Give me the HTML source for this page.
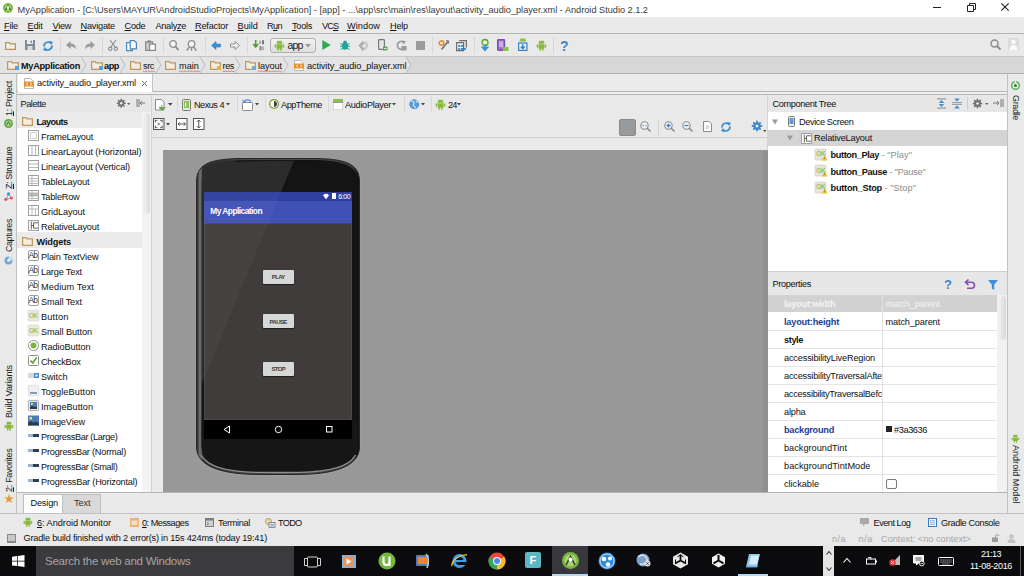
<!DOCTYPE html>
<html><head><meta charset="utf-8"><title>Android Studio</title>
<style>
*{box-sizing:border-box;margin:0;padding:0}
html,body{width:1024px;height:576px;overflow:hidden;background:#e9e9e9}
body{font-family:"Liberation Sans",sans-serif;font-size:9.5px;color:#1a1a1a;position:relative}
.a{position:absolute;white-space:nowrap;display:block}
u{text-decoration:underline;text-underline-offset:1px}
svg{position:absolute;overflow:visible;display:block}
</style></head><body>
<div class="a" style="left:0px;top:0px;width:1024px;height:17px;background:#ffffff;"></div>
<div class="a" style="left:0px;top:17px;width:1024px;height:17px;background:#eaeaea;"></div>
<div class="a" style="left:0px;top:33px;width:1024px;height:1px;background:#b4b4b4;"></div>
<div class="a" style="left:0px;top:34px;width:1024px;height:22px;background:#e9e9e9;"></div>
<div class="a" style="left:0px;top:56px;width:1024px;height:18px;background:#d7d7d7;"></div>
<div class="a" style="left:0px;top:56px;width:1024px;height:1px;background:#c6c6c6;"></div>
<div class="a" style="left:0px;top:73px;width:1024px;height:1px;background:#b0b0b0;"></div>
<div class="a" style="left:0px;top:74px;width:1024px;height:440px;background:#e9e9e9;"></div>
<div class="a" style="left:0px;top:74px;width:17px;height:439px;background:#e9e9e9;border-right:1px solid #c2c2c2;"></div>
<div class="a" style="left:1007px;top:74px;width:17px;height:439px;background:#e9e9e9;border-left:1px solid #c2c2c2;"></div>
<div class="a" style="left:17px;top:74px;width:990px;height:17px;background:#ebebeb;"></div>
<div class="a" style="left:17px;top:91px;width:990px;height:1px;background:#b4b4b4;"></div>
<div class="a" style="left:17px;top:92px;width:990px;height:2px;background:#efefef;"></div>
<div class="a" style="left:17px;top:94px;width:990px;height:1px;background:#b4b4b4;"></div>
<div class="a" style="left:18px;top:74px;width:135px;height:18px;background:#ffffff;border-right:1px solid #c4c4c4;"></div>
<svg style="left:3px;top:3px" width="10" height="10" viewBox="0 0 10 10"><circle cx="5" cy="5" r="5" fill="#7cb342"/><circle cx="5" cy="5" r="3.4" fill="#9ccc65"/><path d="M2.3 7.2 L5 2.6 L7.7 7.2" fill="none" stroke="#33691e" stroke-width="1.1"/><circle cx="5" cy="4.6" r="1.3" fill="#fff"/></svg>
<span class="a" id="t0" style="font-size:9.2px;line-height:12px;height:12px;color:#3a3a3a;letter-spacing:-0.010px;left:17.5px;top:3.5px;">MyApplication - [C:\Users\MAYUR\AndroidStudioProjects\MyApplication] - [app] - ...\app\src\main\res\layout\activity_audio_player.xml - Android Studio 2.1.2</span>
<div class="a" style="left:933px;top:7px;width:8px;height:1px;background:#222;"></div>
<svg style="left:967px;top:3px" width="9" height="9" viewBox="0 0 9 9"><path d="M0.5 2.5h6v6h-6z M2.5 2.5v-2h6v6h-2" fill="none" stroke="#222" stroke-width="1"/></svg>
<svg style="left:1001px;top:3px" width="8" height="8" viewBox="0 0 8 8"><path d="M0.3 0.3L7.7 7.7M7.7 0.3L0.3 7.7" stroke="#222" stroke-width="1.1"/></svg>
<span class="a" id="t1" style="font-size:9.2px;line-height:12px;height:12px;color:#111;letter-spacing:-0.207px;left:4px;top:19.5px;"><u>F</u>ile</span>
<span class="a" id="t2" style="font-size:9.2px;line-height:12px;height:12px;color:#111;letter-spacing:-0.215px;left:27.5px;top:19.5px;"><u>E</u>dit</span>
<span class="a" id="t3" style="font-size:9.2px;line-height:12px;height:12px;color:#111;letter-spacing:-0.316px;left:52.5px;top:19.5px;"><u>V</u>iew</span>
<span class="a" id="t4" style="font-size:9.2px;line-height:12px;height:12px;color:#111;letter-spacing:-0.223px;left:80.5px;top:19.5px;"><u>N</u>avigate</span>
<span class="a" id="t5" style="font-size:9.2px;line-height:12px;height:12px;color:#111;letter-spacing:-0.246px;left:124.5px;top:19.5px;"><u>C</u>ode</span>
<span class="a" id="t6" style="font-size:9.2px;line-height:12px;height:12px;color:#111;letter-spacing:-0.315px;left:155.5px;top:19.5px;">Analy<u>z</u>e</span>
<span class="a" id="t7" style="font-size:9.2px;line-height:12px;height:12px;color:#111;letter-spacing:-0.217px;left:195px;top:19.5px;"><u>R</u>efactor</span>
<span class="a" id="t8" style="font-size:9.2px;line-height:12px;height:12px;color:#111;letter-spacing:0.009px;left:237.5px;top:19.5px;"><u>B</u>uild</span>
<span class="a" id="t9" style="font-size:9.2px;line-height:12px;height:12px;color:#111;letter-spacing:-0.630px;left:267px;top:19.5px;">R<u>u</u>n</span>
<span class="a" id="t10" style="font-size:9.2px;line-height:12px;height:12px;color:#111;letter-spacing:-0.291px;left:292px;top:19.5px;"><u>T</u>ools</span>
<span class="a" id="t11" style="font-size:9.2px;line-height:12px;height:12px;color:#111;letter-spacing:-0.900px;left:322px;top:19.5px;">VC<u>S</u></span>
<span class="a" id="t12" style="font-size:9.2px;line-height:12px;height:12px;color:#111;letter-spacing:0.052px;left:347px;top:19.5px;"><u>W</u>indow</span>
<span class="a" id="t13" style="font-size:9.2px;line-height:12px;height:12px;color:#111;letter-spacing:-0.227px;left:390px;top:19.5px;"><u>H</u>elp</span>
<svg style="left:5px;top:40.5px" width="11" height="9" viewBox="0 0 11 9"><path d="M0.6 1.6h3.6l1 1.3h5.2v5.5h-9.8z" fill="#f3efe8" stroke="#bb9259" stroke-width="1.2"/></svg>
<svg style="left:24.5px;top:40px" width="10" height="10" viewBox="0 0 10 10"><path d="M0 0h10v10h-10z" fill="#7f8b97"/><rect x="2" y="0" width="6" height="4" fill="#e8edf2"/><rect x="2.5" y="6" width="5" height="4" fill="#d5dbe2"/><rect x="5.5" y="0.7" width="1.5" height="2.4" fill="#7f8b97"/></svg>
<svg style="left:42px;top:39.5px" width="12" height="12" viewBox="0 0 12 12"><path d="M2 6.5A4.2 4.2 0 0 1 9 3.2" fill="none" stroke="#3c8ed0" stroke-width="1.8"/><path d="M10 5.5A4.2 4.2 0 0 1 3 8.8" fill="none" stroke="#3c8ed0" stroke-width="1.8"/><path d="M7.2 0.8l3.8 1.2-2 3.2z" fill="#3c8ed0"/><path d="M4.8 11.2l-3.8-1.2 2-3.2z" fill="#3c8ed0"/></svg>
<div class="a" style="left:60px;top:37px;width:1px;height:17px;background:#d9d9d9;"></div>
<svg style="left:66px;top:40.5px" width="10" height="9" viewBox="0 0 10 9"><path d="M0 4l4.5-4v2.5c3 0 5.5 1.5 5.5 6-1.3-2.3-3-3-5.5-3v2.5z" fill="#9c9c9c"/></svg>
<svg style="left:84.5px;top:40.5px" width="10" height="9" viewBox="0 0 10 9"><path d="M10 4l-4.5-4v2.5c-3 0-5.5 1.5-5.5 6 1.3-2.3 3-3 5.5-3v2.5z" fill="#9c9c9c"/></svg>
<div class="a" style="left:102px;top:37px;width:1px;height:17px;background:#d9d9d9;"></div>
<svg style="left:107.5px;top:39.5px" width="10" height="11" viewBox="0 0 10 11"><path d="M2 0l5.5 7.5M8 0l-5.5 7.5" stroke="#8e8e8e" stroke-width="1.1" fill="none"/><circle cx="2.2" cy="8.8" r="1.7" fill="none" stroke="#8e8e8e" stroke-width="1.1"/><circle cx="7.8" cy="8.8" r="1.7" fill="none" stroke="#8e8e8e" stroke-width="1.1"/></svg>
<svg style="left:126px;top:39.5px" width="11" height="11" viewBox="0 0 11 11"><path d="M0.6 2.6h5.8v8h-5.8z" fill="#fff" stroke="#4a86b8" stroke-width="1.2"/><path d="M4.2 0.6h4l2.2 2.2v6h-6.2z" fill="#fff" stroke="#4a86b8" stroke-width="1.2"/></svg>
<svg style="left:145px;top:39.5px" width="11" height="11" viewBox="0 0 11 11"><path d="M0.6 1.8h7v8.6h-7z" fill="#c9c9c9" stroke="#8a8a8a" stroke-width="1.2"/><rect x="2.5" y="0.3" width="3.2" height="2.4" fill="#8a8a8a"/><path d="M4.6 4.2h5.8v6.2h-5.8z" fill="#fff" stroke="#8a8a8a" stroke-width="1.2"/></svg>
<div class="a" style="left:162.5px;top:37px;width:1px;height:17px;background:#d9d9d9;"></div>
<svg style="left:169px;top:39.5px" width="10" height="11" viewBox="0 0 10 11"><circle cx="4" cy="4" r="3.3" fill="#f4f4f4" stroke="#8e8e8e" stroke-width="1.3"/><path d="M6.4 6.6l3.2 3.6" stroke="#8e8e8e" stroke-width="1.8"/></svg>
<svg style="left:186px;top:39.5px" width="11.5" height="11" viewBox="0 0 11.5 11"><circle cx="5.5" cy="4" r="3.3" fill="#f4f4f4" stroke="#8e8e8e" stroke-width="1.3"/><path d="M3.6 6.6l-3 4M7.4 6.6l3 4M5.5 7.2v3.5" stroke="#8e8e8e" stroke-width="1.5" fill="none"/></svg>
<div class="a" style="left:205px;top:37px;width:1px;height:17px;background:#d9d9d9;"></div>
<svg style="left:211px;top:40.5px" width="10" height="9" viewBox="0 0 10 9"><path d="M0.5 4.5l4.5-4v2.5h4.5v3h-4.5v2.5z" fill="#3a8fd6" stroke="#2f7dc0" stroke-width="0.6"/></svg>
<svg style="left:229.5px;top:40.5px" width="10" height="9" viewBox="0 0 10 9"><path d="M9.5 4.5l-4.5-4v2.5h-4.5v3h4.5v2.5z" fill="#f4f4f4" stroke="#8e8e8e" stroke-width="1"/></svg>
<div class="a" style="left:247px;top:37px;width:1px;height:17px;background:#d9d9d9;"></div>
<svg style="left:253px;top:39.5px" width="11" height="11" viewBox="0 0 11 11"><path d="M2.7 0v6M0.3 4l2.4 3 2.4-3" stroke="#4a9e2f" stroke-width="1.6" fill="none"/><path d="M7 0.5v3.5M9.5 0.5h1v3.5h-1zM7 6.5h1v3.5h-1zM10 6.5v3.5" stroke="#6a6a6a" stroke-width="0.9" fill="none"/></svg>
<div class="a" style="left:269.5px;top:38px;width:46.5px;height:15px;border:1px solid #b0b0b0;border-radius:3px;background:linear-gradient(#f2f2f2,#dedede)"></div>
<svg style="left:273.5px;top:39.5px" width="11.0" height="11.0" viewBox="0 0 11 11"><path d="M2.5 3.8a3 3 0 0 1 6 0z" fill="#86b83a"/><rect x="2.5" y="4.3" width="6" height="4.4" rx="0.6" fill="#86b83a"/><rect x="0.7" y="4.3" width="1.3" height="3.4" rx="0.6" fill="#86b83a"/><rect x="9" y="4.3" width="1.3" height="3.4" rx="0.6" fill="#86b83a"/><rect x="3.5" y="8" width="1.4" height="2.8" rx="0.6" fill="#86b83a"/><rect x="6.1" y="8" width="1.4" height="2.8" rx="0.6" fill="#86b83a"/><path d="M3.3 0.3l1 1.4M7.7 0.3l-1 1.4" stroke="#86b83a" stroke-width="0.6"/></svg>
<span class="a" id="t14" style="font-size:10.5px;line-height:14px;height:14px;color:#1a1a1a;letter-spacing:-0.844px;left:287.5px;top:38.0px;">app</span>
<svg style="left:305px;top:43.5px" width="6" height="4" viewBox="0 0 6 4"><path d="M0 0h6l-3 3.5z" fill="#9a9a9a"/></svg>
<svg style="left:321.5px;top:40px" width="9" height="10" viewBox="0 0 9 10"><path d="M0.3 0l8.5 5-8.5 5z" fill="#2fa84f"/></svg>
<svg style="left:340px;top:39.5px" width="10" height="11" viewBox="0 0 10 11"><ellipse cx="5" cy="6" rx="3" ry="3.8" fill="#1fa59a"/><circle cx="5" cy="2.3" r="1.7" fill="#1fa59a"/><path d="M0.3 3.5l2.5 1.3M9.7 3.5l-2.5 1.3M0 6.3h2.5M10 6.3h-2.5M0.5 9.5l2.3-1.3M9.5 9.5l-2.3-1.3" stroke="#1fa59a" stroke-width="1"/></svg>
<svg style="left:358px;top:39.5px" width="11" height="11" viewBox="0 0 11 11"><path d="M0.5 5.5l4-4.5 2.5 2-3 3 3 3-2.5 2z" fill="#b0b0b0"/><path d="M6 2.5l2-1.5 2.5 4.5-2.5 4.5-2-1.5 2-3z" fill="#c8c8c8"/></svg>
<svg style="left:378px;top:39px" width="10" height="12" viewBox="0 0 10 12"><rect x="0.6" y="0.6" width="5.8" height="9.8" rx="0.8" fill="#e6e6e6" stroke="#777" stroke-width="1.2"/><path d="M5 7.5h4.5v4h-4.5z" fill="#59a869"/><path d="M6 9.5h2.5" stroke="#fff" stroke-width="0.8"/></svg>
<svg style="left:396px;top:39.5px" width="11" height="11" viewBox="0 0 11 11"><path d="M8.5 2.8A4 4 0 1 0 9 7" fill="none" stroke="#9a9a9a" stroke-width="1.7"/><path d="M6 0.2l4 1.3-2.5 3z" fill="#9a9a9a"/><rect x="5.5" y="6" width="5" height="4.5" fill="#9a9a9a"/></svg>
<div class="a" style="left:415.5px;top:40.5px;width:9px;height:9px;background:#9b9b9b;"></div>
<div class="a" style="left:432px;top:37px;width:1px;height:17px;background:#d9d9d9;"></div>
<svg style="left:438px;top:39.5px" width="11" height="11" viewBox="0 0 11 11"><circle cx="3.5" cy="3" r="2.3" fill="#fbe3c0" stroke="#e08a2e" stroke-width="1.4"/><path d="M10 1.5l-6.5 8" stroke="#777" stroke-width="1.8"/><path d="M8 0.5l2.7 0.6-0.6 2.7" fill="none" stroke="#777" stroke-width="1.1"/></svg>
<svg style="left:456px;top:39.5px" width="11" height="11" viewBox="0 0 11 11"><path d="M0.6 2.6h7v8h-7z" fill="#eee" stroke="#6d6d6d" stroke-width="1.2"/><path d="M3.2 0.6h7.2v7" fill="none" stroke="#6d6d6d" stroke-width="1.2"/><rect x="2.2" y="5" width="2" height="2" fill="#3a8fd6"/><rect x="5" y="5" width="2" height="2" fill="#3a8fd6"/><rect x="2.2" y="8" width="2" height="2" fill="#3a8fd6"/><rect x="5" y="8" width="2" height="2" fill="#3a8fd6"/><rect x="8" y="8" width="2" height="2" fill="#3a8fd6"/></svg>
<div class="a" style="left:474px;top:37px;width:1px;height:17px;background:#d9d9d9;"></div>
<svg style="left:480px;top:39px" width="10" height="12" viewBox="0 0 10 12"><circle cx="5" cy="3.5" r="3" fill="#dff0d0" stroke="#5aa02c" stroke-width="1.3"/><path d="M5 5v5M2 8l3 3.5 3-3.5z" fill="#3a8fd6" stroke="#3a8fd6" stroke-width="1.2"/></svg>
<svg style="left:497px;top:39px" width="11.5" height="12" viewBox="0 0 11.5 12"><rect x="0.6" y="0.6" width="7" height="10.8" rx="0.8" fill="#9a6fc0" stroke="#7a4fa6" stroke-width="1.2"/><rect x="2" y="2.2" width="4.2" height="6" fill="#c9aee3"/><path d="M6 8h5.5v4h-5.5z" fill="#8bc34a"/></svg>
<svg style="left:517.5px;top:39px" width="9.5" height="12" viewBox="0 0 9.5 12"><path d="M1.5 2.5a3.2 3.2 0 0 1 6.5 0z" fill="#8bc34a"/><path d="M2 0l1 1.3M7.5 0l-1 1.3" stroke="#8bc34a" stroke-width="0.7"/><rect x="0.6" y="4" width="8.3" height="7.4" fill="#e9f2fb" stroke="#3a7fc0" stroke-width="1.2"/><path d="M4.750 5v4M2.8 7.5l1.950 2.2 1.950-2.2" stroke="#3a7fc0" stroke-width="1.3" fill="none"/></svg>
<svg style="left:536px;top:39.5px" width="11.0" height="11.0" viewBox="0 0 11 11"><path d="M2.5 3.8a3 3 0 0 1 6 0z" fill="#86b83a"/><rect x="2.5" y="4.3" width="6" height="4.4" rx="0.6" fill="#86b83a"/><rect x="0.7" y="4.3" width="1.3" height="3.4" rx="0.6" fill="#86b83a"/><rect x="9" y="4.3" width="1.3" height="3.4" rx="0.6" fill="#86b83a"/><rect x="3.5" y="8" width="1.4" height="2.8" rx="0.6" fill="#86b83a"/><rect x="6.1" y="8" width="1.4" height="2.8" rx="0.6" fill="#86b83a"/><path d="M3.3 0.3l1 1.4M7.7 0.3l-1 1.4" stroke="#86b83a" stroke-width="0.6"/></svg>
<div class="a" style="left:553px;top:37px;width:1px;height:17px;background:#d9d9d9;"></div>
<span class="a" id="t15" style="font-size:14px;line-height:18px;height:18px;color:#3c86c4;letter-spacing:-0.562px;font-weight:700;left:560px;top:36.5px;">?</span>
<svg style="left:990px;top:39px" width="11" height="11" viewBox="0 0 11 11"><circle cx="4.5" cy="4.5" r="3.5" fill="none" stroke="#8a8a8a" stroke-width="1.5"/><path d="M7 7l3.5 3.5" stroke="#8a8a8a" stroke-width="1.8"/></svg>
<svg style="left:1008px;top:38px" width="11" height="12" viewBox="0 0 11 12"><rect width="11" height="12" fill="#dcdcdc"/><circle cx="5.5" cy="4" r="2.3" fill="#fafafa"/><path d="M1.5 12c0-3.5 1.8-5 4-5s4 1.5 4 5z" fill="#fafafa"/></svg>
<div class="a" style="left:0px;top:57px;width:411px;height:16px;background:#e3e3e3;"></div>
<svg style="left:406px;top:57px" width="8" height="16" viewBox="0 0 8 16"><path d="M0 0l5 8-5 8h8v-16z" fill="#d7d7d7"/><path d="M0 0l5 8-5 8" fill="none" stroke="#b8b8b8" stroke-width="1"/></svg>
<svg style="left:7px;top:59.8px" width="12" height="10" viewBox="0 0 12 10"><path d="M0.6 1.6h3.6l1 1.3h6.2v6.5h-10.8z" fill="#f3ecdf" stroke="#bd9660" stroke-width="1.2"/><rect x="8" y="6" width="4" height="4" fill="#5aa0dc"/></svg>
<span class="a" id="t16" style="font-size:9.2px;line-height:12px;height:12px;color:#111;letter-spacing:-0.292px;font-weight:700;left:21px;top:60.0px;">MyApplication</span>
<svg style="left:81px;top:57px" width="6" height="16" viewBox="0 0 6 16"><path d="M0 0l5 8-5 8" fill="none" stroke="#bdbdbd" stroke-width="1"/></svg>
<svg style="left:91px;top:59.8px" width="12" height="10" viewBox="0 0 12 10"><path d="M0.6 1.6h3.6l1 1.3h6.2v6.5h-10.8z" fill="#f3ecdf" stroke="#bd9660" stroke-width="1.2"/><rect x="8" y="6" width="4" height="4" fill="#5aa0dc"/></svg>
<span class="a" id="t17" style="font-size:9.2px;line-height:12px;height:12px;color:#111;letter-spacing:-0.448px;font-weight:700;left:104px;top:60.0px;">app</span>
<svg style="left:120px;top:57px" width="6" height="16" viewBox="0 0 6 16"><path d="M0 0l5 8-5 8" fill="none" stroke="#bdbdbd" stroke-width="1"/></svg>
<svg style="left:130px;top:59.8px" width="11" height="10" viewBox="0 0 11 10"><path d="M0.6 1.6h3.6l1 1.3h5.2v6.5h-9.8z" fill="#f3ecdf" stroke="#bd9660" stroke-width="1.2"/></svg>
<span class="a" id="t18" style="font-size:9.2px;line-height:12px;height:12px;color:#111;letter-spacing:-0.417px;left:143px;top:60.0px;">src</span>
<svg style="left:156px;top:57px" width="6" height="16" viewBox="0 0 6 16"><path d="M0 0l5 8-5 8" fill="none" stroke="#bdbdbd" stroke-width="1"/></svg>
<svg style="left:165px;top:59.8px" width="11" height="10" viewBox="0 0 11 10"><path d="M0.6 1.6h3.6l1 1.3h5.2v6.5h-9.8z" fill="#f3ecdf" stroke="#bd9660" stroke-width="1.2"/></svg>
<span class="a" id="t19" style="font-size:9.2px;line-height:12px;height:12px;color:#111;letter-spacing:0.020px;left:179px;top:60.0px;">main</span>
<svg style="left:200px;top:57px" width="6" height="16" viewBox="0 0 6 16"><path d="M0 0l5 8-5 8" fill="none" stroke="#bdbdbd" stroke-width="1"/></svg>
<svg style="left:209.5px;top:59.8px" width="11" height="10" viewBox="0 0 11 10"><path d="M0.6 1.6h3.6l1 1.3h5.2v6.5h-9.8z" fill="#f3ecdf" stroke="#bd9660" stroke-width="1.2"/><rect x="7" y="6" width="4" height="4" fill="#e0b050"/></svg>
<span class="a" id="t20" style="font-size:9.2px;line-height:12px;height:12px;color:#111;letter-spacing:-0.422px;left:222.5px;top:60.0px;">res</span>
<svg style="left:235px;top:57px" width="6" height="16" viewBox="0 0 6 16"><path d="M0 0l5 8-5 8" fill="none" stroke="#bdbdbd" stroke-width="1"/></svg>
<svg style="left:244.5px;top:59.8px" width="11" height="10" viewBox="0 0 11 10"><path d="M0.6 1.6h3.6l1 1.3h5.2v6.5h-9.8z" fill="#f3ecdf" stroke="#bd9660" stroke-width="1.2"/><rect x="7" y="6" width="4" height="4" fill="#7aa7d0"/></svg>
<span class="a" id="t21" style="font-size:9.2px;line-height:12px;height:12px;color:#111;letter-spacing:-0.089px;left:258px;top:60.0px;">layout</span>
<svg style="left:283px;top:57px" width="6" height="16" viewBox="0 0 6 16"><path d="M0 0l5 8-5 8" fill="none" stroke="#bdbdbd" stroke-width="1"/></svg>
<svg style="left:0;top:0" width="1" height="1"><path d="M143 70.8L144.5 71.8L146.0 70.8L147.5 71.8L149.0 70.8L150.5 71.8L152.0 70.8L153.5 71.8L155.0 70.8" fill="none" stroke="#d9534f" stroke-width="0.7"/></svg>
<svg style="left:0;top:0" width="1" height="1"><path d="M179 70.8L180.5 71.8L182.0 70.8L183.5 71.8L185.0 70.8L186.5 71.8L188.0 70.8L189.5 71.8L191.0 70.8L192.5 71.8L194.0 70.8L195.5 71.8L197.0 70.8L198.5 71.8L200.0 70.8" fill="none" stroke="#d9534f" stroke-width="0.7"/></svg>
<svg style="left:0;top:0" width="1" height="1"><path d="M222.5 70.8L224.0 71.8L225.5 70.8L227.0 71.8L228.5 70.8L230.0 71.8L231.5 70.8L233.0 71.8L234.5 70.8" fill="none" stroke="#d9534f" stroke-width="0.7"/></svg>
<svg style="left:0;top:0" width="1" height="1"><path d="M258 70.8L259.5 71.8L261.0 70.8L262.5 71.8L264.0 70.8L265.5 71.8L267.0 70.8L268.5 71.8L270.0 70.8L271.5 71.8L273.0 70.8L274.5 71.8L276.0 70.8L277.5 71.8L279.0 70.8L280.5 71.8L282.0 70.8" fill="none" stroke="#d9534f" stroke-width="0.7"/></svg>
<svg style="left:293.5px;top:59.5px" width="10" height="11" viewBox="0 0 10 11"><path d="M0.5 0.5h6l3 3v7h-9z" fill="#fff" stroke="#b9b9b9" stroke-width="1"/><rect x="0" y="3.5" width="10" height="5" fill="#e8912d"/><path d="M3.8 4.7l-1.5 1.3 1.5 1.3M6.2 4.7l1.5 1.3-1.5 1.3" stroke="#fff" stroke-width="0.9" fill="none"/></svg>
<span class="a" id="t22" style="font-size:9.2px;line-height:12px;height:12px;color:#111;letter-spacing:-0.106px;left:307px;top:60.0px;">activity_audio_player.xml</span>
<svg style="left:23.5px;top:77.5px" width="10" height="11" viewBox="0 0 10 11"><path d="M0.5 0.5h6l3 3v7h-9z" fill="#fff" stroke="#b9b9b9" stroke-width="1"/><rect x="0" y="3.5" width="10" height="5" fill="#e8912d"/><path d="M3.8 4.7l-1.5 1.3 1.5 1.3M6.2 4.7l1.5 1.3-1.5 1.3" stroke="#fff" stroke-width="0.9" fill="none"/></svg>
<span class="a" id="t23" style="font-size:9.2px;line-height:12px;height:12px;color:#111;letter-spacing:-0.126px;left:37px;top:77.2px;">activity_audio_player.xml</span>
<svg style="left:142px;top:80.5px" width="5" height="5" viewBox="0 0 5 5"><path d="M0 0l5 5M5 0l-5 5" stroke="#6e6e6e" stroke-width="1"/></svg>
<span class="a" id="t24" style="font-size:9px;line-height:12px;height:12px;color:#222;letter-spacing:-0.303px;left:2.5px;top:116px;transform-origin:0 0;transform:rotate(-90deg) translate(0,0);"><u>1</u>: Project</span>
<svg style="left:4px;top:118.5px" width="9" height="9" viewBox="0 0 9 9"><circle cx="4.5" cy="4.5" r="4.5" fill="#6aa84f"/><circle cx="4.5" cy="4.5" r="2.8" fill="#a5d68a"/><path d="M2.5 6.2l2-3.4 2 3.4" stroke="#2f6b1c" stroke-width="0.9" fill="none"/></svg>
<span class="a" id="t25" style="font-size:9px;line-height:12px;height:12px;color:#222;letter-spacing:-0.376px;left:2.5px;top:189px;transform-origin:0 0;transform:rotate(-90deg) translate(0,0);"><u>Z</u>: Structure</span>
<svg style="left:4px;top:192px" width="9" height="9" viewBox="0 0 9 9"><path d="M2 7.5l2.5-5.5 3 4z" fill="none" stroke="#8a8a8a" stroke-width="0.8"/><circle cx="4.5" cy="1.8" r="1.6" fill="#3a8fd6"/><circle cx="1.8" cy="7.3" r="1.6" fill="#e05a4f"/><circle cx="7.4" cy="6" r="1.6" fill="#e05a4f"/></svg>
<span class="a" id="t26" style="font-size:9px;line-height:12px;height:12px;color:#222;letter-spacing:-0.441px;left:2.5px;top:252px;transform-origin:0 0;transform:rotate(-90deg) translate(0,0);">Captures</span>
<svg style="left:4px;top:256px" width="9" height="9" viewBox="0 0 9 9"><circle cx="4.5" cy="4.5" r="4" fill="#6fa8dc"/><path d="M4.5 0.5a4 4 0 0 1 4 4h-4z" fill="#cfe2f3"/><circle cx="4.5" cy="4.5" r="1.3" fill="#fff"/></svg>
<span class="a" id="t27" style="font-size:9px;line-height:12px;height:12px;color:#222;letter-spacing:-0.134px;left:2.5px;top:418px;transform-origin:0 0;transform:rotate(-90deg) translate(0,0);">Build Variants</span>
<svg style="left:3.5px;top:421px" width="9.9" height="9.9" viewBox="0 0 11 11"><path d="M2.5 3.8a3 3 0 0 1 6 0z" fill="#86b83a"/><rect x="2.5" y="4.3" width="6" height="4.4" rx="0.6" fill="#86b83a"/><rect x="0.7" y="4.3" width="1.3" height="3.4" rx="0.6" fill="#86b83a"/><rect x="9" y="4.3" width="1.3" height="3.4" rx="0.6" fill="#86b83a"/><rect x="3.5" y="8" width="1.4" height="2.8" rx="0.6" fill="#86b83a"/><rect x="6.1" y="8" width="1.4" height="2.8" rx="0.6" fill="#86b83a"/><path d="M3.3 0.3l1 1.4M7.7 0.3l-1 1.4" stroke="#86b83a" stroke-width="0.6"/></svg>
<span class="a" id="t28" style="font-size:9px;line-height:12px;height:12px;color:#222;letter-spacing:-0.294px;left:2.5px;top:491.5px;transform-origin:0 0;transform:rotate(-90deg) translate(0,0);"><u>2</u>: Favorites</span>
<span class="a" id="t29" style="font-size:12.5px;line-height:16px;height:16px;color:#e39a3c;letter-spacing:-0.719px;left:3.5px;top:491.3px;font-family:'DejaVu Sans',sans-serif;">★</span>
<svg style="left:1011px;top:81px" width="9" height="9" viewBox="0 0 9 9"><circle cx="4.5" cy="4.5" r="3.8" fill="none" stroke="#4caf50" stroke-width="1.4"/><circle cx="4.5" cy="4.5" r="1.5" fill="#2e7d32"/><path d="M4.5 0v2" stroke="#ececec" stroke-width="1.2"/></svg>
<span class="a" id="t30" style="font-size:9px;line-height:12px;height:12px;color:#222;letter-spacing:-0.336px;left:1021.5px;top:95px;transform-origin:0 0;transform:rotate(90deg);">Gradle</span>
<svg style="left:1011px;top:433.5px" width="8.8" height="8.8" viewBox="0 0 11 11"><path d="M2.5 3.8a3 3 0 0 1 6 0z" fill="#86b83a"/><rect x="2.5" y="4.3" width="6" height="4.4" rx="0.6" fill="#86b83a"/><rect x="0.7" y="4.3" width="1.3" height="3.4" rx="0.6" fill="#86b83a"/><rect x="9" y="4.3" width="1.3" height="3.4" rx="0.6" fill="#86b83a"/><rect x="3.5" y="8" width="1.4" height="2.8" rx="0.6" fill="#86b83a"/><rect x="6.1" y="8" width="1.4" height="2.8" rx="0.6" fill="#86b83a"/><path d="M3.3 0.3l1 1.4M7.7 0.3l-1 1.4" stroke="#86b83a" stroke-width="0.6"/></svg>
<span class="a" id="t31" style="font-size:9px;line-height:12px;height:12px;color:#222;letter-spacing:0.035px;left:1021.5px;top:445px;transform-origin:0 0;transform:rotate(90deg);">Android Model</span>
<div class="a" style="left:17px;top:95px;width:135px;height:17px;background:#e7e7e7;"></div>
<span class="a" id="t32" style="font-size:9.2px;line-height:12px;height:12px;color:#111;letter-spacing:-0.444px;left:20.5px;top:98.0px;">Palette</span>
<svg style="left:117px;top:99.3px" width="8.5" height="8.5" viewBox="0 0 8 8"><rect x="3.3" y="-0.2" width="1.4" height="8.4" fill="#6e6e6e" transform="rotate(0 4 4)"/><rect x="3.3" y="-0.2" width="1.4" height="8.4" fill="#6e6e6e" transform="rotate(45 4 4)"/><rect x="3.3" y="-0.2" width="1.4" height="8.4" fill="#6e6e6e" transform="rotate(90 4 4)"/><rect x="3.3" y="-0.2" width="1.4" height="8.4" fill="#6e6e6e" transform="rotate(135 4 4)"/><circle cx="4" cy="4" r="2.9" fill="#6e6e6e"/><circle cx="4" cy="4" r="1.2" fill="#eee"/></svg>
<svg style="left:127px;top:102.8px" width="3.5" height="2.1" viewBox="0 0 3.5 2.1"><path d="M0 0h3.5l-1.75 2.1z" fill="#666"/></svg>
<svg style="left:136px;top:99.3px" width="9" height="8" viewBox="0 0 9 8"><path d="M1 0v8M3 0v8" stroke="#777" stroke-width="1"/><path d="M9 4h-5M6 2l-2 2 2 2" stroke="#777" stroke-width="1" fill="none"/></svg>
<div class="a" style="left:17px;top:112px;width:125px;height:380px;background:#ffffff;"></div>
<div class="a" style="left:142px;top:112px;width:9px;height:380px;background:#f3f3f3;"></div>
<div class="a" style="left:143px;top:113px;width:7px;height:101px;border-radius:3px;background:linear-gradient(90deg,#f2f2f2,#dcdcdc);"></div>
<div class="a" style="left:151px;top:95px;width:1px;height:397px;background:#d2d2d2;"></div>
<div class="a" style="left:17px;top:112px;width:125px;height:16px;background:#ebebeb;"></div>
<div class="a" style="left:17px;top:232px;width:125px;height:16px;background:#ebebeb;"></div>
<svg style="left:22px;top:115.6px" width="11" height="10" viewBox="0 0 11 10"><path d="M0.6 1.6h3.6l1 1.3h5.2v6.5h-9.8z" fill="#f3ecdf" stroke="#bd9660" stroke-width="1.2"/></svg>
<span class="a" id="t33" style="font-size:9.2px;line-height:12px;height:12px;color:#111;letter-spacing:-0.605px;font-weight:700;left:36.5px;top:115.6px;">Layouts</span>
<svg style="left:27.5px;top:130.2px" width="11" height="11" viewBox="0 0 11 11"><rect x="0.5" y="0.5" width="10" height="10" fill="#fff" stroke="#a0a0a0"/><rect x="2.5" y="2.5" width="6" height="6" fill="none" stroke="#d0d0d0"/></svg>
<span class="a" id="t34" style="font-size:9.2px;line-height:12px;height:12px;color:#111;letter-spacing:-0.195px;left:41px;top:130.6px;">FrameLayout</span>
<svg style="left:27.5px;top:145.2px" width="11" height="11" viewBox="0 0 11 11"><rect x="0.5" y="0.5" width="10" height="10" fill="#fff" stroke="#a0a0a0"/><path d="M4 0.5v10M7.5 0.5v10" stroke="#a0a0a0" stroke-width="0.8"/></svg>
<span class="a" id="t35" style="font-size:9.2px;line-height:12px;height:12px;color:#111;letter-spacing:-0.107px;left:41px;top:145.6px;">LinearLayout (Horizontal)</span>
<svg style="left:27.5px;top:160.2px" width="11" height="11" viewBox="0 0 11 11"><rect x="0.5" y="0.5" width="10" height="10" fill="#fff" stroke="#a0a0a0"/><path d="M0.5 4h10M0.5 7.5h10" stroke="#a0a0a0" stroke-width="0.8"/></svg>
<span class="a" id="t36" style="font-size:9.2px;line-height:12px;height:12px;color:#111;letter-spacing:-0.128px;left:41px;top:160.6px;">LinearLayout (Vertical)</span>
<svg style="left:27.5px;top:175.2px" width="11" height="11" viewBox="0 0 11 11"><rect x="0.5" y="0.5" width="10" height="10" fill="#fff" stroke="#a0a0a0"/><path d="M0.5 3.5h10M0.5 6h10M0.5 8.5h10M4 0.5v10" stroke="#a0a0a0" stroke-width="0.7"/></svg>
<span class="a" id="t37" style="font-size:9.2px;line-height:12px;height:12px;color:#111;letter-spacing:-0.097px;left:41px;top:175.6px;">TableLayout</span>
<svg style="left:27.5px;top:190.2px" width="11" height="11" viewBox="0 0 11 11"><rect x="0.5" y="0.5" width="10" height="10" fill="#fff" stroke="#a0a0a0"/><rect x="0.5" y="3" width="10" height="3" fill="#bdbdbd"/><path d="M0.5 3h10M0.5 6h10M0.5 8.5h10M4 0.5v10" stroke="#a0a0a0" stroke-width="0.7"/></svg>
<span class="a" id="t38" style="font-size:9.2px;line-height:12px;height:12px;color:#111;letter-spacing:-0.230px;left:41px;top:190.6px;">TableRow</span>
<svg style="left:27.5px;top:205.2px" width="11" height="11" viewBox="0 0 11 11"><rect x="0.5" y="0.5" width="10" height="10" fill="#fff" stroke="#a0a0a0"/><path d="M0.5 4h10M4 0.5v10M7.5 4v6.5" stroke="#a0a0a0" stroke-width="0.7"/></svg>
<span class="a" id="t39" style="font-size:9.2px;line-height:12px;height:12px;color:#111;letter-spacing:-0.095px;left:41px;top:205.6px;">GridLayout</span>
<svg style="left:27.5px;top:220.2px" width="11" height="11" viewBox="0 0 11 11"><rect x="0.5" y="0.5" width="10" height="10" fill="#fff" stroke="#a0a0a0"/><path d="M3.3 1.5v8M3.3 5.5h2.2M10 2.8h-4.5v5.4h4.5" stroke="#555" stroke-width="0.9" fill="none"/></svg>
<span class="a" id="t40" style="font-size:9.2px;line-height:12px;height:12px;color:#111;letter-spacing:-0.199px;left:41px;top:220.6px;">RelativeLayout</span>
<svg style="left:22px;top:235.6px" width="11" height="10" viewBox="0 0 11 10"><path d="M0.6 1.6h3.6l1 1.3h5.2v6.5h-9.8z" fill="#f3ecdf" stroke="#bd9660" stroke-width="1.2"/></svg>
<span class="a" id="t41" style="font-size:9.2px;line-height:12px;height:12px;color:#111;letter-spacing:-0.165px;font-weight:700;left:36.5px;top:235.6px;">Widgets</span>
<svg style="left:27.5px;top:250.20000000000002px" width="11" height="11" viewBox="0 0 11 11"><rect x="0.5" y="0.5" width="10" height="10" rx="1.5" fill="#fff" stroke="#a0a0a0"/></svg>
<span class="a" style="left:28.4px;top:251.4px;font-size:8.5px;line-height:9px;color:#333;letter-spacing:-0.7px">Ab</span>
<span class="a" id="t42" style="font-size:9.2px;line-height:12px;height:12px;color:#111;letter-spacing:-0.137px;left:41px;top:250.6px;">Plain TextView</span>
<svg style="left:27.5px;top:265.20000000000005px" width="11" height="11" viewBox="0 0 11 11"><rect x="0.5" y="0.5" width="10" height="10" rx="1.5" fill="#fff" stroke="#a0a0a0"/></svg>
<span class="a" style="left:28.4px;top:266.40000000000003px;font-size:8.5px;line-height:9px;color:#333;letter-spacing:-0.7px">Ab</span>
<span class="a" id="t43" style="font-size:9.2px;line-height:12px;height:12px;color:#111;letter-spacing:-0.173px;left:41px;top:265.6px;">Large Text</span>
<svg style="left:27.5px;top:280.20000000000005px" width="11" height="11" viewBox="0 0 11 11"><rect x="0.5" y="0.5" width="10" height="10" rx="1.5" fill="#fff" stroke="#a0a0a0"/></svg>
<span class="a" style="left:28.4px;top:281.40000000000003px;font-size:8.5px;line-height:9px;color:#333;letter-spacing:-0.7px">Ab</span>
<span class="a" id="t44" style="font-size:9.2px;line-height:12px;height:12px;color:#111;letter-spacing:0.098px;left:41px;top:280.6px;">Medium Text</span>
<svg style="left:27.5px;top:295.20000000000005px" width="11" height="11" viewBox="0 0 11 11"><rect x="0.5" y="0.5" width="10" height="10" rx="1.5" fill="#fff" stroke="#a0a0a0"/></svg>
<span class="a" style="left:28.4px;top:296.40000000000003px;font-size:8.5px;line-height:9px;color:#333;letter-spacing:-0.7px">Ab</span>
<span class="a" id="t45" style="font-size:9.2px;line-height:12px;height:12px;color:#111;letter-spacing:-0.122px;left:41px;top:295.6px;">Small Text</span>
<svg style="left:27.5px;top:310.20000000000005px" width="11" height="11" viewBox="0 0 11 11"><rect x="0" y="0" width="11" height="11" rx="1" fill="#e8e8e0" stroke="#d5d5cc" stroke-width="0.6"/></svg>
<span class="a" style="left:28.9px;top:312.40000000000003px;font-size:6.3px;line-height:8px;font-weight:700;color:#a3c552;letter-spacing:-0.3px">OK</span>
<span class="a" id="t46" style="font-size:9.2px;line-height:12px;height:12px;color:#111;letter-spacing:0.156px;left:41px;top:310.6px;">Button</span>
<svg style="left:27.5px;top:325.20000000000005px" width="11" height="11" viewBox="0 0 11 11"><rect x="0" y="0" width="11" height="11" rx="1" fill="#e8e8e0" stroke="#d5d5cc" stroke-width="0.6"/></svg>
<span class="a" style="left:28.9px;top:327.40000000000003px;font-size:6.3px;line-height:8px;font-weight:700;color:#a3c552;letter-spacing:-0.3px">OK</span>
<span class="a" id="t47" style="font-size:9.2px;line-height:12px;height:12px;color:#111;letter-spacing:-0.091px;left:41px;top:325.6px;">Small Button</span>
<svg style="left:27.5px;top:340.20000000000005px" width="11" height="11" viewBox="0 0 11 11"><circle cx="5.5" cy="5.5" r="5" fill="#fff" stroke="#8f8f8f"/><circle cx="5.5" cy="5.5" r="3" fill="#7cb342"/></svg>
<span class="a" id="t48" style="font-size:9.2px;line-height:12px;height:12px;color:#111;letter-spacing:-0.098px;left:41px;top:340.6px;">RadioButton</span>
<svg style="left:27.5px;top:355.20000000000005px" width="11" height="11" viewBox="0 0 11 11"><rect x="0.5" y="0.5" width="10" height="10" rx="1" fill="#fff" stroke="#8f8f8f"/><path d="M2.5 5.5l2.2 2.5 4-5.5" stroke="#5a9e2f" stroke-width="1.6" fill="none"/></svg>
<span class="a" id="t49" style="font-size:9.2px;line-height:12px;height:12px;color:#111;letter-spacing:-0.297px;left:41px;top:355.6px;">CheckBox</span>
<svg style="left:27.5px;top:370.20000000000005px" width="11" height="11" viewBox="0 0 11 11"><rect x="0" y="3" width="11" height="5" fill="#cfd8e3"/><rect x="6" y="3" width="5" height="5" fill="#4a86c8"/><rect x="7.5" y="4.5" width="2" height="2" fill="#fff"/></svg>
<span class="a" id="t50" style="font-size:9.2px;line-height:12px;height:12px;color:#111;letter-spacing:-0.094px;left:41px;top:370.6px;">Switch</span>
<svg style="left:27.5px;top:385.20000000000005px" width="11" height="11" viewBox="0 0 11 11"><rect x="0.3" y="0.3" width="10.4" height="10.4" rx="1" fill="#f0f0f0" stroke="#d0d0d0" stroke-width="0.6"/><rect x="2" y="7" width="7" height="2" fill="#7d9cc0"/></svg>
<span class="a" id="t51" style="font-size:9.2px;line-height:12px;height:12px;color:#111;letter-spacing:0.072px;left:41px;top:385.6px;">ToggleButton</span>
<svg style="left:27.5px;top:400.20000000000005px" width="11" height="11" viewBox="0 0 11 11"><rect x="0.4" y="0.4" width="10.2" height="10.2" rx="1" fill="#e4e4e4" stroke="#9a9a9a" stroke-width="0.8"/><rect x="2" y="2" width="7" height="7" fill="#4d7db5"/><path d="M2 9v-2l2-1.2 2 1.2 1.5-0.8 1.5 0.8v2z" fill="#2f3d4a"/><rect x="3" y="3" width="1.8" height="1.8" fill="#f0e08a"/></svg>
<span class="a" id="t52" style="font-size:9.2px;line-height:12px;height:12px;color:#111;letter-spacing:-0.010px;left:41px;top:400.6px;">ImageButton</span>
<svg style="left:27.5px;top:415.20000000000005px" width="11" height="11" viewBox="0 0 11 11"><rect x="0" y="0.5" width="11" height="10" fill="#4d7db5"/><path d="M0 10.5v-3l3-1.5 2.5 1.5 2-1 3.5 1.5v2.5z" fill="#2f3d4a"/><rect x="1.5" y="2" width="2.5" height="2.5" fill="#f0e08a"/></svg>
<span class="a" id="t53" style="font-size:9.2px;line-height:12px;height:12px;color:#111;letter-spacing:-0.144px;left:41px;top:415.6px;">ImageView</span>
<svg style="left:27.5px;top:430.20000000000005px" width="11" height="11" viewBox="0 0 11 11"><rect x="0" y="4" width="11" height="3" fill="#9db3cc"/><rect x="5" y="4" width="6" height="3" fill="#2f3f55"/></svg>
<span class="a" id="t54" style="font-size:9.2px;line-height:12px;height:12px;color:#111;letter-spacing:-0.354px;left:41px;top:430.6px;">ProgressBar (Large)</span>
<svg style="left:27.5px;top:445.20000000000005px" width="11" height="11" viewBox="0 0 11 11"><rect x="0" y="4" width="11" height="3" fill="#9db3cc"/><rect x="5" y="4" width="6" height="3" fill="#2f3f55"/></svg>
<span class="a" id="t55" style="font-size:9.2px;line-height:12px;height:12px;color:#111;letter-spacing:-0.217px;left:41px;top:445.6px;">ProgressBar (Normal)</span>
<svg style="left:27.5px;top:460.20000000000005px" width="11" height="11" viewBox="0 0 11 11"><rect x="0" y="4" width="11" height="3" fill="#9db3cc"/><rect x="5" y="4" width="6" height="3" fill="#2f3f55"/></svg>
<span class="a" id="t56" style="font-size:9.2px;line-height:12px;height:12px;color:#111;letter-spacing:-0.327px;left:41px;top:460.6px;">ProgressBar (Small)</span>
<svg style="left:27.5px;top:475.20000000000005px" width="11" height="11" viewBox="0 0 11 11"><rect x="0" y="4" width="11" height="3" fill="#9db3cc"/><rect x="5" y="4" width="6" height="3" fill="#2f3f55"/></svg>
<span class="a" id="t57" style="font-size:9.2px;line-height:12px;height:12px;color:#111;letter-spacing:-0.192px;left:41px;top:475.6px;">ProgressBar (Horizontal)</span>
<div class="a" style="left:152px;top:95px;width:615px;height:42px;background:#e9e9e9;"></div>
<div class="a" style="left:152px;top:137px;width:615px;height:1px;background:#cfcfcf;"></div>
<div class="a" style="left:152px;top:138px;width:615px;height:12px;background:#eaeaea;"></div>
<div class="a" style="left:152px;top:150px;width:11px;height:342px;background:#eaeaea;"></div>
<svg style="left:155px;top:98.5px" width="11" height="12" viewBox="0 0 11 12"><path d="M0.5 0.5h6l2.5 2.5v8h-8.5z" fill="#fff" stroke="#8a8a8a"/><path d="M4 8.5l3 3 3-3z M5.5 10l1.5-4" fill="#6aa84f" stroke="#6aa84f" stroke-width="1"/></svg>
<svg style="left:167.5px;top:103px" width="4.5" height="2.6999999999999997" viewBox="0 0 4.5 2.6999999999999997"><path d="M0 0h4.5l-2.25 2.6999999999999997z" fill="#444"/></svg>
<div class="a" style="left:177px;top:96px;width:1px;height:16px;background:#d9d9d9;"></div>
<svg style="left:182px;top:98.5px" width="9" height="12" viewBox="0 0 9 12"><rect x="0.5" y="0.5" width="8" height="11" rx="1" fill="#e6e6e6" stroke="#7a7a7a"/><rect x="2" y="2" width="5" height="7" fill="#8bc34a"/><rect x="3" y="3.5" width="1.2" height="4" fill="#fff"/></svg>
<span class="a" id="t58" style="font-size:9.2px;line-height:12px;height:12px;color:#111;letter-spacing:-0.531px;left:194px;top:98.6px;">Nexus 4</span>
<svg style="left:225.5px;top:103px" width="4" height="2.4" viewBox="0 0 4 2.4"><path d="M0 0h4l-2.0 2.4z" fill="#444"/></svg>
<div class="a" style="left:237px;top:96px;width:1px;height:16px;background:#d9d9d9;"></div>
<svg style="left:242px;top:98.5px" width="11" height="12" viewBox="0 0 11 12"><rect x="0.5" y="3.5" width="10" height="8" rx="0.8" fill="#fff" stroke="#8a8a8a"/><path d="M2 2.5a4.5 4.5 0 0 1 7 0" fill="none" stroke="#4a86c8" stroke-width="1.2"/><path d="M0.8 0.8l0.6 2.6 2.4-0.8" fill="none" stroke="#4a86c8" stroke-width="0.9"/></svg>
<svg style="left:255px;top:103px" width="4" height="2.4" viewBox="0 0 4 2.4"><path d="M0 0h4l-2.0 2.4z" fill="#444"/></svg>
<div class="a" style="left:265px;top:96px;width:1px;height:16px;background:#d9d9d9;"></div>
<svg style="left:269px;top:99px" width="10" height="10" viewBox="0 0 10 10"><circle cx="5" cy="5" r="4.4" fill="#fff" stroke="#7a9a2e" stroke-width="1.2"/><path d="M5 2a3 3 0 0 1 0 6z" fill="#444"/></svg>
<span class="a" id="t59" style="font-size:9.2px;line-height:12px;height:12px;color:#111;letter-spacing:-0.494px;left:281px;top:98.6px;">AppTheme</span>
<div class="a" style="left:328px;top:96px;width:1px;height:16px;background:#d9d9d9;"></div>
<svg style="left:333px;top:98.5px" width="10" height="11" viewBox="0 0 10 11"><rect x="0.3" y="0.3" width="9.4" height="10.4" fill="#fff" stroke="#c8c8c8" stroke-width="0.6"/><rect x="0" y="0" width="10" height="2.8" fill="#8bc34a"/><rect x="0" y="2.8" width="10" height="0.8" fill="#555"/></svg>
<span class="a" id="t60" style="font-size:9.2px;line-height:12px;height:12px;color:#111;letter-spacing:-0.322px;left:345px;top:98.6px;">AudioPlayer</span>
<svg style="left:392px;top:103px" width="4" height="2.4" viewBox="0 0 4 2.4"><path d="M0 0h4l-2.0 2.4z" fill="#444"/></svg>
<div class="a" style="left:403.5px;top:96px;width:1px;height:16px;background:#d9d9d9;"></div>
<svg style="left:408.5px;top:98.5px" width="10.5" height="10.5" viewBox="0 0 10.5 10.5"><circle cx="5.250" cy="5.250" r="5" fill="#5b9bd5"/><path d="M2 2.5c1.5-1 2.5 0 3 1s-1 2-0.5 3 2 1 2 2.5M7 1.5c0.5 1 1.5 1.5 2.5 2" fill="none" stroke="#d6e6f5" stroke-width="1.2"/></svg>
<svg style="left:421px;top:103px" width="4" height="2.4" viewBox="0 0 4 2.4"><path d="M0 0h4l-2.0 2.4z" fill="#444"/></svg>
<div class="a" style="left:431px;top:96px;width:1px;height:16px;background:#d9d9d9;"></div>
<svg style="left:435px;top:98.5px" width="11.0" height="11.0" viewBox="0 0 11 11"><path d="M2.5 3.8a3 3 0 0 1 6 0z" fill="#86b83a"/><rect x="2.5" y="4.3" width="6" height="4.4" rx="0.6" fill="#86b83a"/><rect x="0.7" y="4.3" width="1.3" height="3.4" rx="0.6" fill="#86b83a"/><rect x="9" y="4.3" width="1.3" height="3.4" rx="0.6" fill="#86b83a"/><rect x="3.5" y="8" width="1.4" height="2.8" rx="0.6" fill="#86b83a"/><rect x="6.1" y="8" width="1.4" height="2.8" rx="0.6" fill="#86b83a"/><path d="M3.3 0.3l1 1.4M7.7 0.3l-1 1.4" stroke="#86b83a" stroke-width="0.6"/></svg>
<span class="a" id="t61" style="font-size:9.2px;line-height:12px;height:12px;color:#111;letter-spacing:-0.900px;left:448px;top:98.6px;">24</span>
<svg style="left:457px;top:103px" width="4" height="2.4" viewBox="0 0 4 2.4"><path d="M0 0h4l-2.0 2.4z" fill="#444"/></svg>
<svg style="left:153px;top:118px" width="11.5" height="12" viewBox="0 0 11.5 12"><rect x="0.5" y="0.5" width="10.5" height="11" fill="#f8f8f8" stroke="#555"/><path d="M2.3 4.4v-2.1h2.1M9.2 4.4v-2.1h-2.1M2.3 7.6v2.1h2.1M9.2 7.6v2.1h-2.1" stroke="#444" stroke-width="0.9" fill="none"/><path d="M4.6 4.8l2.3 2.4M6.9 4.8l-2.3 2.4" stroke="#666" stroke-width="0.8"/></svg>
<svg style="left:166px;top:123px" width="4" height="2.4" viewBox="0 0 4 2.4"><path d="M0 0h4l-2.0 2.4z" fill="#444"/></svg>
<svg style="left:176px;top:118px" width="11.5" height="12" viewBox="0 0 11.5 12"><rect x="0.5" y="0.5" width="10.5" height="11" fill="#fff" stroke="#555"/><path d="M2 6h7.5M3.8 4.2l-1.8 1.8 1.8 1.8M7.7 4.2l1.8 1.8-1.8 1.8" stroke="#444" stroke-width="0.9" fill="none"/></svg>
<svg style="left:192.5px;top:118px" width="11.5" height="12" viewBox="0 0 11.5 12"><rect x="0.5" y="0.5" width="10.5" height="11" fill="#fff" stroke="#555"/><path d="M5.750 2v8M4 3.8l1.750-1.8 1.750 1.8M4 8.2l1.750 1.8 1.750-1.8" stroke="#444" stroke-width="0.9" fill="none"/></svg>
<div class="a" style="left:619px;top:119px;width:17px;height:17px;background:#9a9a9a;border:1px solid #8a8a8a;border-radius:2px;"></div>
<svg style="left:623px;top:123px" width="8" height="8" viewBox="0 0 8 8"><path d="M1 1l5 5M3 1h-2v2" stroke="#7fa6cc" stroke-width="0.9" fill="none"/></svg>
<svg style="left:640px;top:121px" width="11" height="11" viewBox="0 0 11 11"><circle cx="4.5" cy="4.5" r="3.7" fill="#f6f6f6" stroke="#8a8a8a" stroke-width="1.1"/><path d="M7.2 7.2l3.3 3.3" stroke="#8a8a8a" stroke-width="1.6"/><path d="M3 3.5v2M6 3.5v2" stroke="#4a86c8" stroke-width="0.9"/></svg>
<div class="a" style="left:658px;top:121px;width:1px;height:15px;background:#d2d2d2;"></div>
<svg style="left:664px;top:121px" width="11" height="11" viewBox="0 0 11 11"><circle cx="4.5" cy="4.5" r="3.7" fill="#f6f6f6" stroke="#8a8a8a" stroke-width="1.1"/><path d="M7.2 7.2l3.3 3.3" stroke="#8a8a8a" stroke-width="1.6"/><path d="M2.5 4.5h4M4.5 2.5v4" stroke="#3a7fc8" stroke-width="1.3"/></svg>
<svg style="left:682px;top:121px" width="11" height="11" viewBox="0 0 11 11"><circle cx="4.5" cy="4.5" r="3.7" fill="#f6f6f6" stroke="#8a8a8a" stroke-width="1.1"/><path d="M7.2 7.2l3.3 3.3" stroke="#8a8a8a" stroke-width="1.6"/><path d="M2.5 4.5h4" stroke="#3a7fc8" stroke-width="1.3"/></svg>
<svg style="left:702.5px;top:121px" width="9" height="11" viewBox="0 0 9 11"><path d="M0.5 0.5h5.5l2.5 2.5v7.5h-8z" fill="#fff" stroke="#8a8a8a"/><path d="M2.5 5h4M2.5 7h4" stroke="#aaa" stroke-width="0.8"/></svg>
<svg style="left:720px;top:120.5px" width="12" height="12" viewBox="0 0 12 12"><path d="M2 6.5A4.2 4.2 0 0 1 9 3.2" fill="none" stroke="#3c8ed0" stroke-width="1.7"/><path d="M10 5.5A4.2 4.2 0 0 1 3 8.8" fill="none" stroke="#3c8ed0" stroke-width="1.7"/><path d="M7.2 0.8l3.8 1.2-2 3.2z" fill="#3c8ed0"/><path d="M4.8 11.2l-3.8-1.2 2-3.2z" fill="#3c8ed0"/></svg>
<svg style="left:752px;top:121px" width="10" height="10" viewBox="0 0 8 8"><rect x="3.3" y="-0.2" width="1.4" height="8.4" fill="#3a86c8" transform="rotate(0 4 4)"/><rect x="3.3" y="-0.2" width="1.4" height="8.4" fill="#3a86c8" transform="rotate(45 4 4)"/><rect x="3.3" y="-0.2" width="1.4" height="8.4" fill="#3a86c8" transform="rotate(90 4 4)"/><rect x="3.3" y="-0.2" width="1.4" height="8.4" fill="#3a86c8" transform="rotate(135 4 4)"/><circle cx="4" cy="4" r="2.9" fill="#3a86c8"/><circle cx="4" cy="4" r="1.2" fill="#eee"/></svg>
<svg style="left:762.5px;top:130px" width="3.5" height="2.1" viewBox="0 0 3.5 2.1"><path d="M0 0h3.5l-1.75 2.1z" fill="#444"/></svg>
<div class="a" style="left:163px;top:150px;width:605px;height:342px;background:#989898;"></div>
<div class="a" style="left:763px;top:151px;width:5px;height:341px;background:#909090;"></div>
<svg style="left:196px;top:158px" width="164" height="317" viewBox="0 0 164 317">
<defs><clipPath id="phc"><path d="M5.6 25C5.6 10 14 2.6 45 2L119 2C151 2.6 162.4 10 162.4 25L162.4 288C162.4 304 143 313.6 104 314.2L60 314.2C22 313.6 5.6 304 5.6 288Z"/></clipPath>
<linearGradient id="rimg" gradientUnits="userSpaceOnUse" x1="0" y1="0" x2="164" y2="0"><stop offset="0" stop-color="#333"/><stop offset="0.013" stop-color="#3a3a3a"/><stop offset="0.019" stop-color="#6c6c6c"/><stop offset="0.032" stop-color="#686868"/><stop offset="0.038" stop-color="#2c2c2c"/><stop offset="0.5" stop-color="#555"/><stop offset="0.96" stop-color="#3a3a3a"/><stop offset="0.985" stop-color="#151515"/><stop offset="1" stop-color="#111"/></linearGradient>
<filter id="phs" x="-10%" y="-10%" width="120%" height="120%"><feGaussianBlur stdDeviation="1.3"/></filter></defs>
<path d="M0.5 24C0.5 8 10 1 44 0.5L120 0.5C154 1 163.5 8 163.5 24L163.5 289C163.5 306 144 316 104 316.5L60 316.5C20 316 0.5 306 0.5 289Z" fill="#b4b4b4" opacity=".8" filter="url(#phs)" transform="translate(0,0.5)"/>
<path d="M0.5 24C0.5 8 10 1 44 0.5L120 0.5C154 1 163.5 8 163.5 24L163.5 289C163.5 306 144 316 104 316.5L60 316.5C20 316 0.5 306 0.5 289Z" fill="url(#rimg)" stroke="#262626" stroke-width="1"/>
<path d="M5.6 25C5.6 10 14 2.6 45 2L119 2C151 2.6 162.4 10 162.4 25L162.4 288C162.4 304 143 313.6 104 314.2L60 314.2C22 313.6 5.6 304 5.6 288Z" fill="#141415"/>
<g clip-path="url(#phc)">
<path d="M0 0L99 0L-32 317L0 317Z" fill="#ffffff" opacity=".105"/>
<rect x="0" y="262" width="164" height="60" fill="#161617"/>
</g>
<clipPath id="phb"><rect x="0" y="297" width="164" height="20"/></clipPath>
<path d="M3 24.5C3 9.5 12 2.8 44.5 2.4L119.5 2.4C152 2.8 161.5 9.5 161.5 24.5L161.5 288.5C161.5 304.5 143.5 313.7 104 314.3L60 314.3C20.5 313.7 3 304.5 3 288.5Z" fill="none" stroke="#8e8e8e" stroke-width="1.3" clip-path="url(#phb)"/>
<path d="M40 3.3C60 2.5 104 2.5 124 3.3" fill="none" stroke="#111" stroke-width="1.2" opacity=".8"/>
</svg>
<div class="a" style="left:204px;top:192px;width:148px;height:9px;background:#303f9f;"></div>
<div class="a" style="left:204px;top:201px;width:148px;height:22px;background:#3f51b5;"></div>
<div class="a" style="left:204px;top:223px;width:148px;height:197px;background:#403c3b;"></div>
<div class="a" style="left:204px;top:420px;width:148px;height:19px;background:#000;"></div>
<div class="a" style="left:204px;top:223px;width:148px;height:197px;border:1px dotted rgba(255,255,255,.13);"></div>
<svg style="left:204px;top:192px" width="148" height="228"><path d="M0 0H77L0 187Z" fill="#fff" opacity=".03"/></svg>
<svg style="left:323px;top:194px" width="6" height="5.5" viewBox="0 0 6 5.5"><path d="M0 1.2a4.3 4.3 0 0 1 6 0l-3 4z" fill="#fff"/></svg>
<div class="a" style="left:332px;top:193.2px;width:4px;height:6.3px;background:#fff;"></div>
<div class="a" style="left:333px;top:192.6px;width:2px;height:1px;background:#fff;"></div>
<span class="a" id="t62" style="font-size:7px;line-height:9px;height:9px;color:#fff;letter-spacing:-0.406px;left:338.3px;top:192.0px;">6:00</span>
<span class="a" id="t63" style="font-size:8.4px;line-height:11px;height:11px;color:#fff;letter-spacing:-0.539px;font-weight:700;left:210.3px;top:206.3px;">My Application</span>
<div class="a" style="left:262.5px;top:269.8px;width:31px;height:14px;background:#d6d7d7;border-radius:1px;box-shadow:0 1px 1px rgba(0,0,0,.5);"></div>
<span class="a" id="t64" style="font-size:6px;line-height:8px;height:8px;color:#3c3c3c;letter-spacing:-0.638px;font-weight:700;left:271.8px;top:273.0px;">PLAY</span>
<div class="a" style="left:262.5px;top:314.3px;width:31px;height:14px;background:#d6d7d7;border-radius:1px;box-shadow:0 1px 1px rgba(0,0,0,.5);"></div>
<span class="a" id="t65" style="font-size:6px;line-height:8px;height:8px;color:#3c3c3c;letter-spacing:-0.567px;font-weight:700;left:269.4px;top:317.5px;">PAUSE</span>
<div class="a" style="left:262.5px;top:362px;width:31px;height:14px;background:#d6d7d7;border-radius:1px;box-shadow:0 1px 1px rgba(0,0,0,.5);"></div>
<span class="a" id="t66" style="font-size:6px;line-height:8px;height:8px;color:#3c3c3c;letter-spacing:-0.684px;font-weight:700;left:271.5px;top:365.2px;">STOP</span>
<svg style="left:223px;top:425px" width="8" height="9" viewBox="0 0 8 9"><path d="M6.5 1v7l-5.5-3.5z" fill="none" stroke="#fff" stroke-width="1"/></svg>
<svg style="left:273.5px;top:425px" width="9" height="9" viewBox="0 0 9 9"><circle cx="4.5" cy="4.5" r="3.2" fill="none" stroke="#fff" stroke-width="1"/></svg>
<svg style="left:325.5px;top:426px" width="7" height="7" viewBox="0 0 7 7"><rect x="0.5" y="0.5" width="5.5" height="5.5" fill="none" stroke="#fff" stroke-width="1"/></svg>
<div class="a" style="left:767px;top:95px;width:1px;height:55px;background:#d4d4d4;"></div>
<div class="a" style="left:768px;top:95px;width:239px;height:17px;background:#e7e7e7;"></div>
<span class="a" id="t67" style="font-size:9.2px;line-height:12px;height:12px;color:#111;letter-spacing:-0.353px;left:772.5px;top:98.0px;">Component Tree</span>
<svg style="left:937px;top:97.5px" width="9" height="11" viewBox="0 0 9 11"><path d="M0 0.8h9M0 10.2h9" stroke="#9a9a9a" stroke-width="1.3"/><path d="M4.5 2l2.8 3h-5.6zM4.5 9l2.8-3h-5.6z" fill="#4a90cc"/></svg>
<svg style="left:952px;top:97.5px" width="10" height="11" viewBox="0 0 10 11"><path d="M0 4.6h10M0 6.4h10" stroke="#9a9a9a" stroke-width="1"/><path d="M5 3.8l2.8-3.2h-5.6zM5 7.2l2.8 3.2h-5.6z" fill="#4a90cc"/></svg>
<div class="a" style="left:967px;top:97px;width:1px;height:13px;background:#cdcdcd;"></div>
<svg style="left:973px;top:99px" width="9" height="9" viewBox="0 0 8 8"><rect x="3.3" y="-0.2" width="1.4" height="8.4" fill="#6e6e6e" transform="rotate(0 4 4)"/><rect x="3.3" y="-0.2" width="1.4" height="8.4" fill="#6e6e6e" transform="rotate(45 4 4)"/><rect x="3.3" y="-0.2" width="1.4" height="8.4" fill="#6e6e6e" transform="rotate(90 4 4)"/><rect x="3.3" y="-0.2" width="1.4" height="8.4" fill="#6e6e6e" transform="rotate(135 4 4)"/><circle cx="4" cy="4" r="2.9" fill="#6e6e6e"/><circle cx="4" cy="4" r="1.2" fill="#eee"/></svg>
<svg style="left:984.5px;top:102.5px" width="3.5" height="2.1" viewBox="0 0 3.5 2.1"><path d="M0 0h3.5l-1.75 2.1z" fill="#666"/></svg>
<svg style="left:993px;top:99px" width="10" height="8" viewBox="0 0 10 8"><path d="M8 0v8M10 0v8" stroke="#777" stroke-width="1"/><path d="M0 4h6M4 2l2 2-2 2" stroke="#777" stroke-width="1" fill="none"/></svg>
<div class="a" style="left:768px;top:112px;width:239px;height:159px;background:#ffffff;"></div>
<div class="a" style="left:768px;top:130px;width:239px;height:16px;background:#d4d4d4;"></div>
<svg style="left:772px;top:118.5px" width="6" height="6" viewBox="0 0 6 6"><path d="M0 0.5h6l-3 5z" fill="#9a9a9a"/></svg>
<svg style="left:787.5px;top:116px" width="7" height="11" viewBox="0 0 7 11"><rect x="0.5" y="0.5" width="6" height="10" rx="1" fill="#f0f0f0" stroke="#7a7a7a"/><rect x="1.5" y="2" width="4" height="6" fill="#5b9bd5"/></svg>
<span class="a" id="t68" style="font-size:9.2px;line-height:12px;height:12px;color:#111;letter-spacing:-0.404px;left:799px;top:115.5px;">Device Screen</span>
<svg style="left:787px;top:135px" width="6" height="6" viewBox="0 0 6 6"><path d="M0 0.5h6l-3 5z" fill="#9a9a9a"/></svg>
<svg style="left:800.5px;top:132.5px" width="11" height="11" viewBox="0 0 11 11"><rect x="0.5" y="0.5" width="10" height="10" fill="#fff" stroke="#a0a0a0"/><path d="M3.3 1.5v8M3.3 5.5h2.2M10 2.8h-4.5v5.4h4.5" stroke="#555" stroke-width="0.9" fill="none"/></svg>
<span class="a" id="t69" style="font-size:9.2px;line-height:12px;height:12px;color:#111;letter-spacing:-0.199px;left:814px;top:132.0px;">RelativeLayout</span>
<svg style="left:815px;top:148.5px" width="12.5" height="12" viewBox="0 0 12.5 12"><rect x="0" y="0" width="11" height="11" rx="1" fill="#e4e4dc" stroke="#cfcfc6" stroke-width="0.6"/><path d="M9.6 6.6l3 4.9h-6z" fill="#f0c030"/><path d="M9.6 8.3v1.6" stroke="#7a5a00" stroke-width="0.6"/></svg>
<span class="a" style="left:816.2px;top:150.0px;font-size:6.5px;line-height:8px;font-weight:700;color:#9bc04a;letter-spacing:-0.3px">OK</span>
<span class="a" id="t70" style="font-size:9.2px;line-height:12px;height:12px;color:#111;letter-spacing:-0.371px;font-weight:700;left:830.5px;top:149.0px;">button_Play</span>
<span class="a" id="t71" style="font-size:9.2px;line-height:12px;height:12px;color:#8c8c8c;letter-spacing:0.061px;left:881.5px;top:149.0px;">- &quot;Play&quot;</span>
<svg style="left:815px;top:165.0px" width="12.5" height="12" viewBox="0 0 12.5 12"><rect x="0" y="0" width="11" height="11" rx="1" fill="#e4e4dc" stroke="#cfcfc6" stroke-width="0.6"/><path d="M9.6 6.6l3 4.9h-6z" fill="#f0c030"/><path d="M9.6 8.3v1.6" stroke="#7a5a00" stroke-width="0.6"/></svg>
<span class="a" style="left:816.2px;top:166.5px;font-size:6.5px;line-height:8px;font-weight:700;color:#9bc04a;letter-spacing:-0.3px">OK</span>
<span class="a" id="t72" style="font-size:9.2px;line-height:12px;height:12px;color:#111;letter-spacing:-0.354px;font-weight:700;left:830.5px;top:165.5px;">button_Pause</span>
<span class="a" id="t73" style="font-size:9.2px;line-height:12px;height:12px;color:#8c8c8c;letter-spacing:-0.243px;left:889.5px;top:165.5px;">- &quot;Pause&quot;</span>
<svg style="left:815px;top:181.5px" width="12.5" height="12" viewBox="0 0 12.5 12"><rect x="0" y="0" width="11" height="11" rx="1" fill="#e4e4dc" stroke="#cfcfc6" stroke-width="0.6"/><path d="M9.6 6.6l3 4.9h-6z" fill="#f0c030"/><path d="M9.6 8.3v1.6" stroke="#7a5a00" stroke-width="0.6"/></svg>
<span class="a" style="left:816.2px;top:183.0px;font-size:6.5px;line-height:8px;font-weight:700;color:#9bc04a;letter-spacing:-0.3px">OK</span>
<span class="a" id="t74" style="font-size:9.2px;line-height:12px;height:12px;color:#111;letter-spacing:-0.236px;font-weight:700;left:830.5px;top:182.0px;">button_Stop</span>
<span class="a" id="t75" style="font-size:9.2px;line-height:12px;height:12px;color:#8c8c8c;letter-spacing:0.057px;left:884.5px;top:182.0px;">- &quot;Stop&quot;</span>
<div class="a" style="left:768px;top:271px;width:239px;height:24px;background:#e7e7e7;"></div>
<div class="a" style="left:768px;top:271px;width:239px;height:1px;background:#d0d0d0;"></div>
<span class="a" id="t76" style="font-size:9.2px;line-height:12px;height:12px;color:#111;letter-spacing:-0.338px;left:772.5px;top:278.0px;">Properties</span>
<span class="a" id="t77" style="font-size:13px;line-height:17px;height:17px;color:#3c86c4;letter-spacing:0.047px;font-weight:700;left:944px;top:276.0px;">?</span>
<svg style="left:965px;top:279px" width="11" height="10" viewBox="0 0 11 10"><path d="M3.5 0.5l-3 2.8 3 2.8" fill="none" stroke="#8a4fb0" stroke-width="1.6"/><path d="M1 3.3h5.5a3 3 0 0 1 0 6h-4.5" fill="none" stroke="#8a4fb0" stroke-width="1.6"/></svg>
<svg style="left:987.5px;top:279.7px" width="10" height="10" viewBox="0 0 10 10"><path d="M0 0h10l-3.8 4.5v5.5l-2.4-1.5v-4z" fill="#3a8fd6"/></svg>
<div class="a" style="left:768px;top:295px;width:229px;height:197px;background:#ffffff;"></div>
<div class="a" style="left:997px;top:295px;width:10px;height:197px;background:#f1f1f1;"></div>
<div class="a" style="left:999px;top:296px;width:7px;height:44px;border-radius:3px;background:linear-gradient(90deg,#f0f0f0,#d8d8d8);"></div>
<div class="a" style="left:768px;top:295px;width:229px;height:17px;background:#d2d2d2;"></div>
<div class="a" style="left:882px;top:295px;width:1px;height:17px;background:#e2e2e2;"></div>
<div class="a" style="left:768px;top:330px;width:229px;height:1px;background:#e4e4e4;"></div>
<div class="a" style="left:768px;top:348px;width:229px;height:1px;background:#e4e4e4;"></div>
<div class="a" style="left:768px;top:366px;width:229px;height:1px;background:#e4e4e4;"></div>
<div class="a" style="left:768px;top:384px;width:229px;height:1px;background:#e4e4e4;"></div>
<div class="a" style="left:768px;top:402px;width:229px;height:1px;background:#e4e4e4;"></div>
<div class="a" style="left:768px;top:420px;width:229px;height:1px;background:#e4e4e4;"></div>
<div class="a" style="left:768px;top:438px;width:229px;height:1px;background:#e4e4e4;"></div>
<div class="a" style="left:768px;top:456px;width:229px;height:1px;background:#e4e4e4;"></div>
<div class="a" style="left:768px;top:474px;width:229px;height:1px;background:#e4e4e4;"></div>
<div class="a" style="left:768px;top:492px;width:229px;height:1px;background:#e4e4e4;"></div>
<div class="a" style="left:882px;top:313px;width:1px;height:179px;background:#e4e4e4;"></div>
<span class="a" id="t78" style="font-size:9.2px;line-height:12px;height:12px;color:#f4f4f4;letter-spacing:-0.217px;font-weight:700;left:784px;top:298.0px;">layout:width</span>
<span class="a" id="t79" style="font-size:9.2px;line-height:12px;height:12px;color:#1c3f94;letter-spacing:-0.207px;font-weight:700;left:784px;top:316.0px;">layout:height</span>
<span class="a" id="t80" style="font-size:9.2px;line-height:12px;height:12px;color:#111;letter-spacing:-0.391px;font-weight:700;left:784px;top:334.0px;">style</span>
<span class="a" id="t81" style="font-size:9.2px;line-height:12px;height:12px;color:#111;letter-spacing:-0.173px;left:784px;top:352.0px;">accessibilityLiveRegion</span>
<span class="a" id="t82" style="font-size:9.2px;line-height:12px;height:12px;color:#111;letter-spacing:-0.204px;left:784px;top:370.0px;max-width:98px;overflow:hidden;">accessibilityTraversalAfte</span>
<span class="a" id="t83" style="font-size:9.2px;line-height:12px;height:12px;color:#111;letter-spacing:-0.283px;left:784px;top:388.0px;max-width:98px;overflow:hidden;">accessibilityTraversalBefc</span>
<span class="a" id="t84" style="font-size:9.2px;line-height:12px;height:12px;color:#111;letter-spacing:-0.197px;left:784px;top:406.0px;">alpha</span>
<span class="a" id="t85" style="font-size:9.2px;line-height:12px;height:12px;color:#1c3f94;letter-spacing:-0.258px;font-weight:700;left:784px;top:424.0px;">background</span>
<span class="a" id="t86" style="font-size:9.2px;line-height:12px;height:12px;color:#111;letter-spacing:0.000px;left:784px;top:442.0px;">backgroundTint</span>
<span class="a" id="t87" style="font-size:9.2px;line-height:12px;height:12px;color:#111;letter-spacing:0.029px;left:784px;top:460.0px;">backgroundTintMode</span>
<span class="a" id="t88" style="font-size:9.2px;line-height:12px;height:12px;color:#111;letter-spacing:-0.026px;left:784px;top:478.0px;">clickable</span>
<span class="a" id="t89" style="font-size:9.2px;line-height:12px;height:12px;color:#f4f4f4;letter-spacing:-0.141px;left:885.5px;top:298.0px;">match_parent</span>
<span class="a" id="t90" style="font-size:9.2px;line-height:12px;height:12px;color:#111;letter-spacing:-0.141px;left:885.5px;top:316.0px;">match_parent</span>
<div class="a" style="left:885.5px;top:426px;width:6px;height:6px;background:#222;"></div>
<span class="a" id="t91" style="font-size:9.2px;line-height:12px;height:12px;color:#111;letter-spacing:-0.397px;left:894px;top:424.0px;">#3a3636</span>
<div class="a" style="left:885.5px;top:478.5px;width:11px;height:10px;background:#fff;border:1px solid #7a7a7a;border-radius:2px;"></div>
<div class="a" style="left:17px;top:492px;width:990px;height:1px;background:#b4b4b4;"></div>
<div class="a" style="left:17px;top:493px;width:990px;height:20px;background:#eaeaea;"></div>
<div class="a" style="left:23px;top:494px;width:78px;height:19px;background:#d9d9d9;border:1px solid #bdbdbd;border-bottom:none;"></div>
<div class="a" style="left:23px;top:494px;width:40px;height:20px;background:#ffffff;border:1px solid #bdbdbd;border-bottom:none;"></div>
<span class="a" id="t92" style="font-size:9.2px;line-height:12px;height:12px;color:#111;letter-spacing:-0.185px;left:30.5px;top:497.0px;">Design</span>
<span class="a" id="t93" style="font-size:9.2px;line-height:12px;height:12px;color:#333;letter-spacing:-0.090px;left:74px;top:497.0px;">Text</span>
<div class="a" style="left:0px;top:513px;width:1024px;height:1px;background:#c2c2c2;"></div>
<div class="a" style="left:0px;top:514px;width:1024px;height:17px;background:#e9e9e9;"></div>
<svg style="left:23px;top:517px" width="9.9" height="9.9" viewBox="0 0 11 11"><path d="M2.5 3.8a3 3 0 0 1 6 0z" fill="#86b83a"/><rect x="2.5" y="4.3" width="6" height="4.4" rx="0.6" fill="#86b83a"/><rect x="0.7" y="4.3" width="1.3" height="3.4" rx="0.6" fill="#86b83a"/><rect x="9" y="4.3" width="1.3" height="3.4" rx="0.6" fill="#86b83a"/><rect x="3.5" y="8" width="1.4" height="2.8" rx="0.6" fill="#86b83a"/><rect x="6.1" y="8" width="1.4" height="2.8" rx="0.6" fill="#86b83a"/><path d="M3.3 0.3l1 1.4M7.7 0.3l-1 1.4" stroke="#86b83a" stroke-width="0.6"/></svg>
<span class="a" id="t94" style="font-size:9.2px;line-height:12px;height:12px;color:#111;letter-spacing:-0.032px;left:37px;top:516.5px;"><u>6</u>: Android Monitor</span>
<svg style="left:130px;top:518px" width="9" height="9" viewBox="0 0 9 9"><rect width="9" height="9" fill="#e7b37a"/><rect x="1.5" y="2.5" width="6" height="4.5" fill="#f6dcc0"/></svg>
<span class="a" id="t95" style="font-size:9.2px;line-height:12px;height:12px;color:#111;letter-spacing:-0.510px;left:142px;top:516.5px;"><u>0</u>: Messages</span>
<svg style="left:205px;top:518px" width="9" height="9" viewBox="0 0 9 9"><rect x="0.5" y="0.5" width="8" height="8" fill="#cfcfcf" stroke="#7d7d7d"/><rect x="0.5" y="0.5" width="8" height="2" fill="#7d7d7d"/><path d="M2 4.5l1.5 1.2-1.5 1.2" stroke="#555" stroke-width="0.7" fill="none"/></svg>
<span class="a" id="t96" style="font-size:9.2px;line-height:12px;height:12px;color:#111;letter-spacing:-0.340px;left:218px;top:516.5px;">Terminal</span>
<svg style="left:265px;top:517.5px" width="10" height="10" viewBox="0 0 10 10"><circle cx="3.5" cy="3.5" r="3" fill="#f0d9a8" stroke="#b08a4a" stroke-width="0.8"/><rect x="4" y="4.5" width="6" height="5" fill="#e8e8e8" stroke="#777" stroke-width="0.8"/><path d="M5.5 6.5h3M5.5 8h3" stroke="#3a86c8" stroke-width="0.7"/></svg>
<span class="a" id="t97" style="font-size:9.2px;line-height:12px;height:12px;color:#111;letter-spacing:-0.719px;left:278px;top:516.5px;">TODO</span>
<svg style="left:859.5px;top:518px" width="9" height="9" viewBox="0 0 9 9"><path d="M0 0h9v6h-4l-2 2.5v-2.5h-3z" fill="#a9a9a9"/></svg>
<span class="a" id="t98" style="font-size:9.2px;line-height:12px;height:12px;color:#111;letter-spacing:-0.488px;left:873.5px;top:516.5px;">Event Log</span>
<svg style="left:928px;top:518px" width="9" height="9" viewBox="0 0 9 9"><rect x="0.5" y="0.5" width="8" height="8" fill="#fff" stroke="#3a78b8"/><rect x="2" y="2" width="5" height="5" fill="#9bc0e6"/><path d="M2.5 3.5h4M2.5 5.5h4" stroke="#fff" stroke-width="0.7"/></svg>
<span class="a" id="t99" style="font-size:9.2px;line-height:12px;height:12px;color:#111;letter-spacing:-0.382px;left:941px;top:516.5px;">Gradle Console</span>
<div class="a" style="left:0px;top:530.5px;width:1024px;height:1px;background:#cdcdcd;"></div>
<div class="a" style="left:0px;top:531px;width:1024px;height:15px;background:#e9e9e9;"></div>
<svg style="left:7px;top:533.5px" width="9" height="9" viewBox="0 0 9 9"><rect x="0.5" y="0.5" width="8" height="8" fill="#c8c8c8" stroke="#8a8a8a"/><rect x="0.5" y="7" width="8" height="1.5" fill="#8a8a8a"/></svg>
<span class="a" id="t100" style="font-size:9.2px;line-height:12px;height:12px;color:#111;letter-spacing:-0.209px;left:23.5px;top:532.0px;">Gradle build finished with 2 error(s) in 15s 424ms (today 19:41)</span>
<span class="a" id="t101" style="font-size:9.2px;line-height:12px;height:12px;color:#a8a8a8;letter-spacing:0.406px;left:832px;top:532.5px;">n/a</span>
<span class="a" id="t102" style="font-size:9.2px;line-height:12px;height:12px;color:#a8a8a8;letter-spacing:0.573px;left:858.5px;top:532.5px;">n/a</span>
<span class="a" id="t103" style="font-size:9.2px;line-height:12px;height:12px;color:#a8a8a8;letter-spacing:0.004px;left:881px;top:532.5px;">Context: &lt;no context&gt;</span>
<svg style="left:991px;top:534px" width="8" height="8" viewBox="0 0 8 8"><rect x="1" y="3.5" width="6" height="4.5" fill="#9a9a9a"/><path d="M4.5 3.5v-1.5a1.8 1.8 0 0 1 3.5 0" fill="none" stroke="#9a9a9a" stroke-width="1"/></svg>
<svg style="left:1007px;top:533.5px" width="9" height="9" viewBox="0 0 9 9"><circle cx="4.5" cy="2.5" r="2.3" fill="#c4c4c4"/><path d="M0.5 9c0-3 1.5-4 4-4s4 1 4 4z" fill="#c4c4c4"/></svg>
<div class="a" style="left:0px;top:546px;width:1024px;height:30px;background:#0b0b0e;"></div>
<div class="a" style="left:36px;top:546px;width:258px;height:30px;background:#3b3b3d;"></div>
<svg style="left:12px;top:555px" width="12.5" height="12" viewBox="0 0 12.5 12"><path d="M0 1.7l5.2-0.7v4.7h-5.2zM5.9 0.9l6.6-0.9v5.7h-6.6zM0 6.4h5.2v4.7l-5.2-0.7zM5.9 6.4h6.6v5.6l-6.6-0.9z" fill="#fff"/></svg>
<span class="a" id="t104" style="font-size:11.5px;line-height:15px;height:15px;color:#a4a4a4;letter-spacing:-0.255px;left:45px;top:554.0px;">Search the web and Windows</span>
<svg style="left:304px;top:555.5px" width="17" height="12" viewBox="0 0 17 12"><rect x="3.5" y="1" width="10" height="10" rx="1" fill="none" stroke="#e8e8e8" stroke-width="0.9"/><path d="M3 2.5h-2.5v7h2.5M14 2.5h2.5v7h-2.5" fill="none" stroke="#e8e8e8" stroke-width="0.9"/></svg>
<div class="a" style="left:552px;top:546px;width:36px;height:30px;background:#38383c;"></div>
<div class="a" style="left:552px;top:574px;width:36px;height:2px;background:#b5d9f5;"></div>
<div class="a" style="left:738px;top:574px;width:30px;height:2px;background:#b5d9f5;"></div>
<div class="a" style="left:823px;top:546px;width:11px;height:30px;background:#e4e4e4;"></div>
<svg style="left:340.5px;top:552.5px" width="16" height="16" viewBox="0 0 16 16"><rect x="1" y="2" width="14" height="13" fill="#7fb2e0"/><rect x="2.5" y="3.5" width="10" height="10" fill="#e8935a"/><path d="M5.5 5.5l5 3-5 3z" fill="#fff"/></svg>
<svg style="left:378px;top:552px" width="18" height="18" viewBox="0 0 18 18"><circle cx="9" cy="9" r="8.5" fill="#76b83f"/><path d="M5.5 4.5v5.5a3 3 0 0 0 6 0v-5.5M11.5 9v5" stroke="#fff" stroke-width="2.2" fill="none"/></svg>
<svg style="left:415px;top:552px" width="17" height="17" viewBox="0 0 17 17"><rect x="1" y="3" width="13" height="11" rx="1" fill="#4f7fb8"/><rect x="3" y="5" width="9" height="7" fill="#e58a3a"/><path d="M11 2c3 3 3 9 1 14" stroke="#c9c9c9" stroke-width="1.6" fill="none"/></svg>
<svg style="left:451.3px;top:552px" width="17" height="17" viewBox="0 0 17 17"><circle cx="8.5" cy="9" r="5.5" fill="none" stroke="#3aa0e8" stroke-width="3"/><rect x="4" y="8" width="10" height="2.2" fill="#3aa0e8"/><rect x="9" y="10" width="6" height="3" fill="#0b0b0e"/><path d="M1 14c-1-5 8-12 15-11" stroke="#f2c230" stroke-width="1.4" fill="none"/></svg>
<svg style="left:488.3px;top:552px" width="18" height="18" viewBox="0 0 18 18"><circle cx="9" cy="9" r="8.5" fill="#e8453c"/><path d="M9 9L1.7 4.7A8.5 8.5 0 0 0 9 17.5z" fill="#3aa757"/><path d="M9 9L9 17.5A8.5 8.5 0 0 0 16.3 4.7z" fill="#f9bb2d"/><circle cx="9" cy="9" r="4" fill="#fff"/><circle cx="9" cy="9" r="3" fill="#4a8af4"/></svg>
<svg style="left:525px;top:552px" width="16" height="16" viewBox="0 0 16 16"><rect width="16" height="16" rx="2" fill="#5bb8c4"/></svg>
<span class="a" style="left:529.5px;top:554px;font-size:11px;line-height:12px;font-weight:700;color:#fff">F</span>
<svg style="left:561.7px;top:552px" width="17" height="17" viewBox="0 0 17 17"><circle cx="8.5" cy="8.5" r="8.5" fill="#7cb342"/><circle cx="8.5" cy="8.5" r="6" fill="#a5d66a"/><path d="M4 13l4.5-8.5 4.5 8.5" stroke="#3b3b3b" stroke-width="1.6" fill="none"/><circle cx="8.5" cy="7.5" r="2" fill="#fff"/></svg>
<svg style="left:598.3px;top:552px" width="18" height="18" viewBox="0 0 18 18"><circle cx="9" cy="9" r="8.5" fill="#2e8ad8"/><circle cx="9" cy="9" r="7" fill="none" stroke="#cfe6fa" stroke-width="1"/><circle cx="6" cy="7" r="2.3" fill="#fff"/><circle cx="12" cy="6.5" r="2" fill="#fff"/><circle cx="10" cy="12.5" r="2.3" fill="#fff"/></svg>
<svg style="left:634.5px;top:552px" width="17" height="17" viewBox="0 0 17 17"><circle cx="8" cy="8" r="6.5" fill="#7e9ec8"/><path d="M3 5c3-3 8-2 9 2s-3 6-7 5" stroke="#d8e2f0" stroke-width="1.5" fill="none"/><circle cx="12.5" cy="11.5" r="3" fill="#ddd"/><path d="M11.3 10.3l2.4 2.4M13.7 10.3l-2.4 2.4" stroke="#444" stroke-width="0.9"/></svg>
<svg style="left:672px;top:552px" width="17" height="17" viewBox="0 0 17 17"><path d="M8.5 0.5l7.5 4.3v7.4l-7.5 4.3-7.5-4.3v-7.4z" fill="#e8e8e8"/><path d="M8.5 8.5v-6M8.5 8.5l5.5 3M8.5 8.5l-5.5 3" stroke="#0b0b0e" stroke-width="1.8"/><path d="M8.5 3l-3 1.8M8.5 3l3 1.8M13.5 11v-3.5M3.5 11v-3.5" stroke="#0b0b0e" stroke-width="1"/></svg>
<svg style="left:710.5px;top:553px" width="15" height="15" viewBox="0 0 15 15"><path d="M7.5 0.5l6.5 3.8v6.4l-6.5 3.8-6.5-3.8v-6.4z" fill="#f2f2f2"/><path d="M7.5 7.5v-5.5M7.5 7.5l5 2.8M7.5 7.5l-5 2.8" stroke="#0b0b0e" stroke-width="2"/></svg>
<svg style="left:745px;top:552px" width="17" height="17" viewBox="0 0 17 17"><path d="M4 2h11l-3 13h-11z" fill="#8fc4ea"/><path d="M6 3.5h8l-2 9h-8z" fill="#d4ecfb"/><path d="M1 15h11l1-2" stroke="#5a9ed0" stroke-width="1" fill="none"/></svg>
<svg style="left:825.5px;top:551px" width="6" height="4" viewBox="0 0 6 4"><path d="M0.5 3.5l2.5-3 2.5 3" stroke="#333" stroke-width="1.1" fill="none"/></svg>
<svg style="left:825.5px;top:567px" width="6" height="4" viewBox="0 0 6 4"><path d="M0.5 0.5l2.5 3 2.5-3" stroke="#333" stroke-width="1.1" fill="none"/></svg>
<svg style="left:843px;top:558px" width="8" height="5" viewBox="0 0 8 5"><path d="M0.5 4.5l3.5-4 3.5 4" stroke="#fff" stroke-width="1.1" fill="none"/></svg>
<svg style="left:866px;top:557px" width="11" height="8" viewBox="0 0 11 8"><rect x="0.5" y="2" width="9" height="5" fill="none" stroke="#fff"/><rect x="9.5" y="3.5" width="1.5" height="2" fill="#fff"/><path d="M2 0.5h3v2" stroke="#fff" stroke-width="0.9" fill="none"/></svg>
<svg style="left:889px;top:555px" width="12" height="11" viewBox="0 0 12 11"><path d="M11 0v10h-10z" fill="#bdbdbd"/><circle cx="3.5" cy="7.5" r="3.2" fill="#e03a3a"/><path d="M2.2 6.2l2.6 2.6M4.8 6.2l-2.6 2.6" stroke="#fff" stroke-width="0.9"/></svg>
<svg style="left:913px;top:554.5px" width="12" height="11" viewBox="0 0 12 11"><path d="M0.5 0.5h10v7.5h-5l-2 2v-2h-3z" fill="#f4f4f4" stroke="#fff"/><path d="M2.5 3h6M2.5 5h6" stroke="#333" stroke-width="0.8"/><circle cx="8.8" cy="8.5" r="2.4" fill="#0b0b0e" stroke="#fff" stroke-width="0.9"/><path d="M7.6 8.5h2.4" stroke="#fff" stroke-width="0.8"/></svg>
<svg style="left:938px;top:556.5px" width="16" height="9" viewBox="0 0 16 9"><rect x="0.5" y="0.5" width="15" height="8" rx="1" fill="none" stroke="#fff"/><path d="M2.5 3h11M2.5 5h11M4.5 7h7" stroke="#fff" stroke-width="0.8" stroke-dasharray="1.2 0.8"/></svg>
<span class="a" id="t105" style="font-size:9px;line-height:12px;height:12px;color:#fff;letter-spacing:-0.506px;left:981px;top:547.5px;">21:13</span>
<span class="a" id="t106" style="font-size:9px;line-height:12px;height:12px;color:#fff;letter-spacing:-0.338px;left:970px;top:560.3px;">11-08-2016</span>
<div class="a" style="left:1020px;top:546px;width:1px;height:30px;background:#555;"></div>
</body></html>
